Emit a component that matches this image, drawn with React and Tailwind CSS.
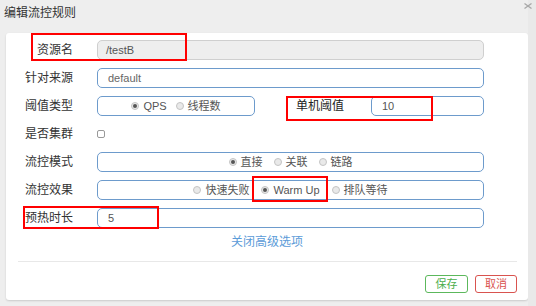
import React from "react";

const Radio = ({ checked, label }) => (
  <span className="flex items-center gap-[4px]">
    <span className="w-[8px] h-[8px] rounded-full border border-[#c4c4c4] bg-[#e9e9e9] flex items-center justify-center">
      {checked && <span className="w-[4px] h-[4px] rounded-full bg-[#555]" />}
    </span>
    <span>{label}</span>
  </span>
);

const Row = ({ label, children }) => (
  <div className="h-[28px] flex items-center">
    <div className="w-[67px] text-right text-[12px] text-[#333] leading-none">{label}</div>
    {children}
  </div>
);

const App = () => {
  return (
    <div
      className="relative w-[536px] h-[306px] bg-[#eeeeee] overflow-hidden flex"
      style={{ fontFamily: '"Liberation Sans", "Noto Sans CJK SC", sans-serif' }}
    >
      <div className="w-[528px] flex flex-col">
        <div className="h-[33px] pl-[4px] pb-[7px] flex items-center text-[12px] text-[#333]">编辑流控规则</div>

        <div className="ml-[6px] w-[522px] h-[267px] bg-white rounded-[3px] shadow-[0_1px_2px_rgba(0,0,0,0.15)] pt-[3px] flex flex-col">
          <Row label="资源名">
            <div className="ml-[24px] w-[387px] h-[20px] rounded-[5px] border border-[#cfcfcf] bg-[#eeeeee] flex items-center pl-[8px] text-[11px] text-[#555]">
              /testB
            </div>
          </Row>
          <Row label="针对来源">
            <div className="ml-[24px] w-[387px] h-[20px] rounded-[5px] border border-[#6d9bcc] flex items-center pl-[10px] text-[11px] text-[#666]">
              default
            </div>
          </Row>
          <Row label="阈值类型">
            <div className="ml-[24px] w-[158px] h-[20px] rounded-[5px] border border-[#6d9bcc] flex items-center justify-center gap-[9px] text-[11px] text-[#555]">
              <Radio checked label="QPS" />
              <Radio label="线程数" />
            </div>
            <div className="ml-[41px] w-[50px] text-[12px] text-[#222] leading-none">单机阈值</div>
            <div className="ml-[25px] w-[113px] h-[20px] rounded-[5px] border border-[#6d9bcc] flex items-center pl-[10px] text-[11px] text-[#555]">
              10
            </div>
          </Row>
          <Row label="是否集群">
            <div className="ml-[24px] w-[8px] h-[8px] rounded-[2px] border border-[#999] bg-white" />
          </Row>
          <Row label="流控模式">
            <div className="ml-[24px] w-[387px] h-[20px] rounded-[5px] border border-[#6d9bcc] flex items-center justify-center gap-[11px] text-[11px] text-[#555]">
              <Radio checked label="直接" />
              <Radio label="关联" />
              <Radio label="链路" />
            </div>
          </Row>
          <Row label="流控效果">
            <div className="ml-[24px] w-[387px] h-[20px] rounded-[5px] border border-[#6d9bcc] flex items-center justify-center gap-[12px] text-[11px] text-[#555]">
              <Radio label="快速失败" />
              <Radio checked label="Warm Up" />
              <Radio label="排队等待" />
            </div>
          </Row>
          <Row label="预热时长">
            <div className="ml-[24px] w-[387px] h-[20px] rounded-[5px] border border-[#6d9bcc] flex items-center pl-[10px] text-[11px] text-[#555]">
              5
            </div>
          </Row>

          <div className="h-[20px] flex items-center justify-center text-[12px] text-[#5b9bd8]">关闭高级选项</div>

          <div className="ml-[12px] mr-[11px] mt-[9px] border-t border-[#e8e8e8]" />

          <div className="mt-[13px] pr-[11px] flex justify-end gap-[7px]">
            <div className="w-[43px] h-[18px] rounded-[3px] border border-[#5cb85c] text-[#4cae4c] text-[11px] flex items-center justify-center">保存</div>
            <div className="w-[42px] h-[18px] rounded-[3px] border border-[#d9534f] text-[#d9534f] text-[11px] flex items-center justify-center">取消</div>
          </div>
        </div>
      </div>
      <div className="w-[8px] bg-[#e9e9e9]" />

      <svg className="absolute left-[524px] top-[3px]" width="8" height="6" viewBox="0 0 8 6">
        <path d="M0.5 0.5 L7.5 5.5 M7.5 0.5 L0.5 5.5" stroke="#a8a8a8" strokeWidth="1.3" />
      </svg>

      <div className="absolute left-[31px] top-[33px] w-[156px] h-[28px] border-2 border-[#ff0000]" />
      <div className="absolute left-[286px] top-[96px] w-[147px] h-[25px] border-2 border-[#ff0000]" />
      <div className="absolute left-[252px] top-[176px] w-[76px] h-[26px] border-2 border-[#ff0000]" />
      <div className="absolute left-[23px] top-[206px] w-[136px] h-[23px] border-2 border-[#ff0000]" />
    </div>
  );
};

export default App;
